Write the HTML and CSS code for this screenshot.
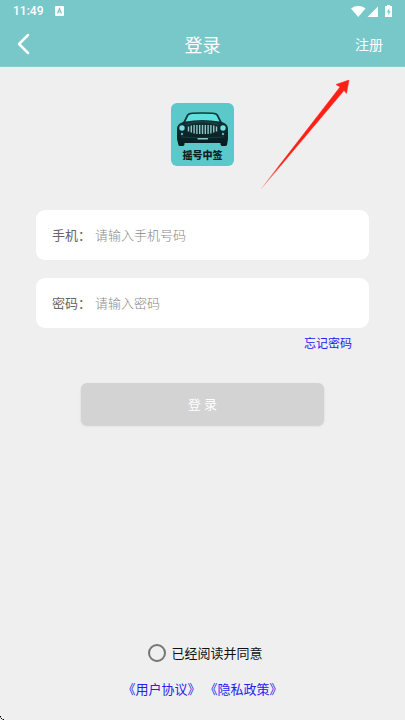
FILE: index.html
```html
<!DOCTYPE html>
<html lang="zh-CN">
<head>
<meta charset="utf-8">
<meta name="viewport" content="width=device-width, initial-scale=1">
<title>登录</title>
<link rel="stylesheet" href="styles.css">
</head>
<body>
<header class="top">
  <div class="status">
    <span class="clock">11:49</span>
    <svg class="keyboard" width="9" height="10" viewBox="0 0 9 10" aria-hidden="true"><rect width="9" height="10" rx="1" fill="#fff"/><path d="M2.500 7.500 4.500 2.500 6.500 7.500M3.200 6h2.600" fill="none" stroke="#79c8c9" stroke-width="1.200"/></svg>
    <svg class="signals" width="42" height="13" viewBox="0 0 42 13" aria-hidden="true">
      <path d="M1 3.500C5 .2 11.500 .2 15.500 3.500L8.250 12Z" fill="#fff"/>
      <path d="M28 1.500V12H17.500Z" fill="#fff"/>
      <path d="M37 0h3v1h2v11h-7V1h2Z" fill="#fff"/>
      <path d="M39.300 3.300 36.800 7.300h1.500v3l2.300-4h-1.500Z" fill="#79c8c9"/>
    </svg>
  </div>
  <nav class="bar">
    <button class="back" type="button" aria-label="返回">
      <svg width="14" height="22" viewBox="0 0 14 22" aria-hidden="true"><path d="M12 2 3 11l9 9" fill="none" stroke="#fff" stroke-width="2.500" stroke-linecap="round" stroke-linejoin="round"/></svg>
    </button>
    <h1 class="title">登录</h1>
    <a class="register" href="#register">注册</a>
  </nav>
</header>

<main class="content">
  <svg class="logo" width="63" height="63" viewBox="0 0 63 63" role="img" aria-label="摇号中签">
    <defs><linearGradient id="body" x1="0" y1="0" x2="0" y2="1"><stop offset="0" stop-color="#12393c"/><stop offset="1" stop-color="#071b1f"/></linearGradient></defs>
    <rect width="63" height="63" rx="6" fill="#5bc9c9"/>
    <path d="M11 19.500 12.500 18.500 16 11.500Q17.500 9.800 21 9.600Q31.500 8.900 42 9.600Q45.500 9.800 47 11.500L50.500 18.500 52 19.500Q57 21 57 26V36L56 42Q55.500 43 54 43H51Q49.500 43 49.500 41V40H13.500V41Q13.500 43 12 43H9Q7.500 43 7.500 42L6 36V26Q6 21 11 19.500Z" fill="url(#body)"/>
    <path d="M14.500 18.500 17.500 12.500Q18.500 11.200 21.500 11Q31.500 10.300 41.500 11Q44.500 11.200 45.500 12.500L48.500 18.500Q31.500 15.500 14.500 18.500Z" fill="#61e0e1"/>
    <path d="M15 21.500Q31.500 16 48 21.500" fill="none" stroke="#2b5558" stroke-width=".6"/>
    <circle cx="11" cy="25" r="2.700" fill="#70e2e3"/><circle cx="52" cy="25" r="2.700" fill="#70e2e3"/>
    <circle cx="11" cy="31" r="1.200" fill="#54b8bb"/><circle cx="52" cy="31" r="1.200" fill="#54b8bb"/>
    <path d="M17.500 23.500v5M20.300 22.500v7M23.100 22v8.500M25.900 22v9M28.700 22v9M31.500 22v9M34.300 22v9M37.100 22v9M39.900 22v8.500M42.700 22.500v7M45.500 23.500v5" stroke="#8fc7c5" stroke-width="1.400"/>
    <path d="M10 34Q31.500 36 53 34" fill="none" stroke="#2b5558" stroke-width=".5"/>
    <rect x="26.500" y="35" width="10.500" height="1.500" rx=".5" fill="#8fc7c5"/>
    <text class="logo-text" x="31.500" y="56" text-anchor="middle">摇号中签</text>
  </svg>

  <form class="form">
    <div class="field">
      <label for="phone">手机：</label>
      <input id="phone" type="tel" placeholder="请输入手机号码">
    </div>
    <div class="field">
      <label for="password">密码：</label>
      <input id="password" type="password" placeholder="请输入密码">
    </div>
    <a class="forgot" href="#forgot">忘记密码</a>
    <button class="submit" type="submit">登 录</button>
  </form>
</main>

<footer class="foot">
  <label class="agree"><input type="checkbox"><span>已经阅读并同意</span></label>
  <div class="policies">
    <a href="#terms">《用户协议》</a>
    <a href="#privacy">《隐私政策》</a>
  </div>
</footer>

<svg class="arrow" width="90" height="110" viewBox="0 0 90 110" aria-hidden="true">
  <defs><linearGradient id="tail" gradientUnits="userSpaceOnUse" x1="1" y1="109" x2="20" y2="86"><stop offset="0" stop-color="#ff2015" stop-opacity=".15"/><stop offset="1" stop-color="#ff2015"/></linearGradient></defs>
  <path d="M1 109 80 7 76 4.500 89 0 86.500 13.500 84 10.500Z" fill="url(#tail)" stroke="url(#tail)" stroke-width=".5"/>
</svg>
<svg class="corner" width="4" height="4" viewBox="0 0 4 4" aria-hidden="true"><path d="M0 0h1v1H0ZM1 2h1v1H1ZM3 3h1v1H3Z" fill="#000"/><path d="M0 1h1v1H0ZM2 3h1v1H2Z" fill="#888"/></svg>
</body>
</html>
```

FILE: styles.css
```css
* {
  box-sizing: border-box;
}

body {
  position: relative;
  display: flex;
  flex-direction: column;
  min-height: 100vh;
  margin: 0;
  background: #efefef;
  color: #111;
  font: 400 13px/20px "Noto Sans CJK SC", sans-serif;
}

a {
  color: #2420f0;
  text-decoration: none;
}

button,
input {
  margin: 0;
  padding: 0;
  border: 0;
  background: none;
  font: inherit;
}

.top {
  background: #79c8c9;
  border-bottom: 1px solid #8ccccd;
  color: #fff;
}

.status {
  display: flex;
  align-items: center;
  height: 22px;
  padding: 0 13px;
}

.clock {
  font: 500 12px/22px Roboto, sans-serif;
}

.keyboard {
  margin-left: 12px;
}

.signals {
  margin-left: auto;
}

.bar {
  display: grid;
  grid-template-columns: 1fr auto 1fr;
  align-items: center;
  height: 44px;
  padding: 0 22px 0 16px;
}

.back {
  display: flex;
  justify-self: start;
}

.title {
  margin: 0;
  padding-left: 6px;
  font-size: 18px;
  font-weight: 400;
}

.register {
  justify-self: end;
  color: #fff;
  font-size: 14px;
}

.content {
  display: flex;
  flex-direction: column;
  padding: 36px 36px 0;
}

.logo {
  align-self: center;
}

.logo-text {
  fill: #0a2023;
  font-size: 10px;
  font-weight: 900;
}

.form {
  display: flex;
  flex-direction: column;
  margin-top: 44px;
}

.field {
  display: flex;
  align-items: center;
  height: 50px;
  padding: 0 16px;
  border-radius: 9px;
  background: #fff;
  color: #666;
}

.field + .field {
  margin-top: 18px;
}

.field input {
  flex: 1;
  min-width: 0;
  margin-left: 4px;
  outline: 0;
  font-weight: 300;
}

.field input::placeholder {
  color: #888;
  opacity: 1;
}

.forgot {
  align-self: flex-end;
  margin: 5px 17px 0 0;
  font-size: 12px;
}

.submit {
  height: 42px;
  margin: 30px 45px 0;
  border-radius: 6px;
  background: #d3d3d3;
  box-shadow: 0 1px 2px #ccc;
  color: #fff;
}

.foot {
  display: flex;
  flex-direction: column;
  align-items: center;
  gap: 16px;
  margin-top: auto;
  padding-bottom: 21px;
}

.agree {
  display: flex;
  align-items: center;
  gap: 5px;
  padding-left: 6px;
}

.agree input {
  appearance: none;
  width: 18px;
  height: 18px;
  border: 2px solid #757575;
  border-radius: 50%;
}

.policies {
  display: flex;
  gap: 4px;
}

.arrow {
  position: absolute;
  top: 80px;
  right: 55px;
  pointer-events: none;
}

.corner {
  position: absolute;
  bottom: 0;
  left: 0;
}
```
